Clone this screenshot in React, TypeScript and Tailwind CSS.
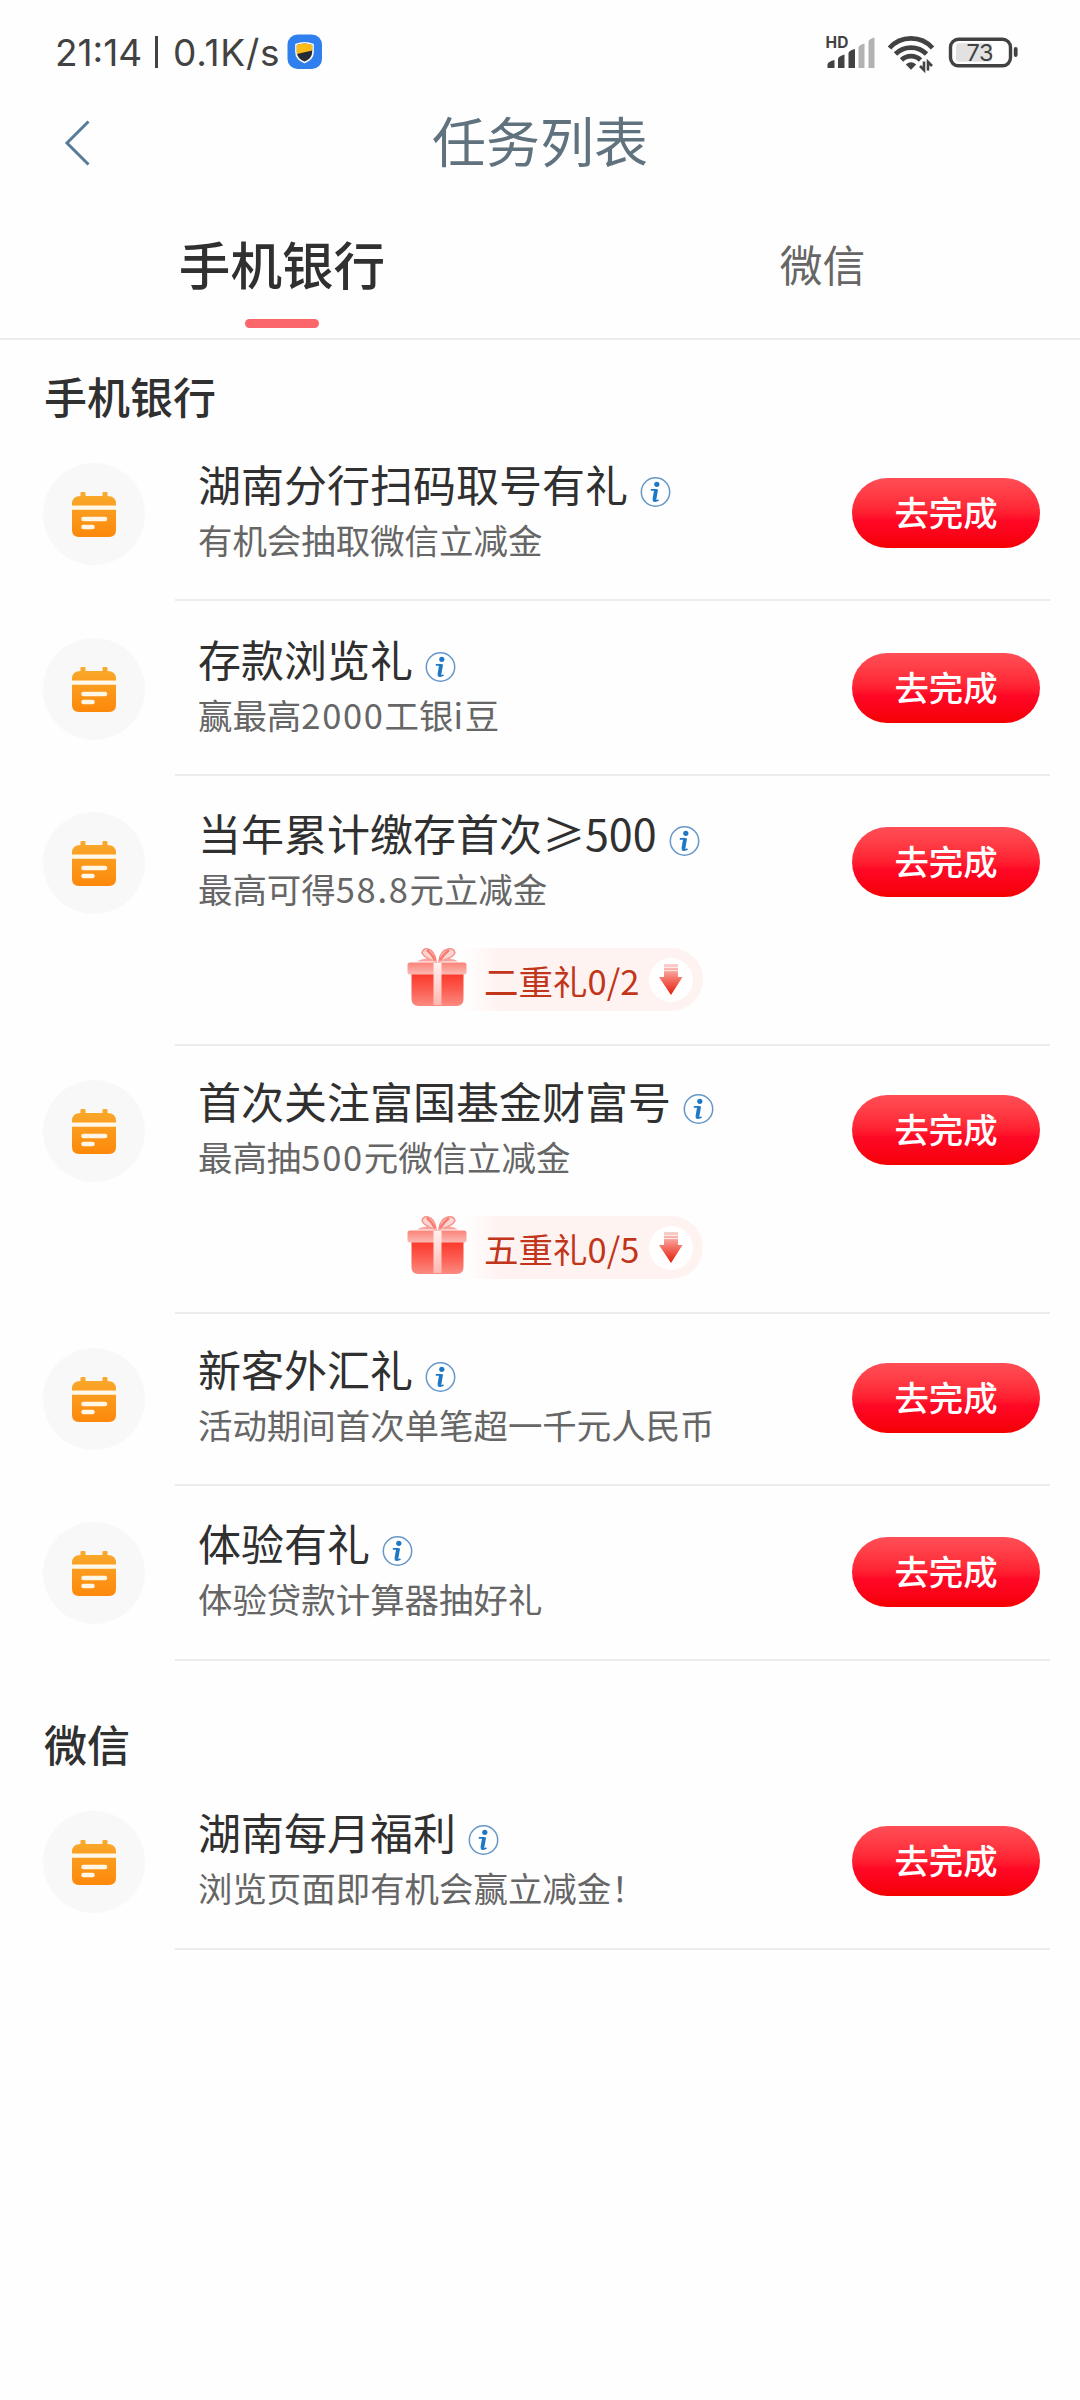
import React from "react";

type Task = {
  title: string;
  desc: string;
  size: string;
  gift?: string;
};

const BANK_TASKS: Task[] = [
  { title: "湖南分行扫码取号有礼", desc: "有机会抽取微信立减金", size: "h-[138px] mb-[37px]" },
  { title: "存款浏览礼", desc: "赢最高2000工银i豆", size: "h-[138px] mb-[36px]" },
  { title: "当年累计缴存首次≥500", desc: "最高可得58.8元立减金", size: "h-[234px] mb-[34px]", gift: "二重礼0/2" },
  { title: "首次关注富国基金财富号", desc: "最高抽500元微信立减金", size: "h-[234px] mb-[34px]", gift: "五重礼0/5" },
  { title: "新客外汇礼", desc: "活动期间首次单笔超一千元人民币", size: "h-[138px] mb-[36px]" },
  { title: "体验有礼", desc: "体验贷款计算器抽好礼", size: "h-[139px]" },
];

const WECHAT_TASKS: Task[] = [
  { title: "湖南每月福利", desc: "浏览页面即有机会赢立减金！", size: "h-[139px]" },
];

function StatusBar() {
  return (
    <div className="flex h-[104px] items-center justify-between pl-[55px] pr-[61px]">
      <div className="flex items-center font-['Inter',sans-serif] text-[37px] leading-[44px] text-[#424242]">
        <span className="mt-px w-[100px] whitespace-nowrap">21:14</span>
        <span className="h-[32px] w-[3px] bg-[#424242]" />
        <span className="ml-[15px] mt-px w-[107px] whitespace-nowrap tracking-[0.800px]">0.1K/s</span>
        <svg width="36" height="36" viewBox="0 0 36 36" className="ml-[7px]">
          <rect x="0.5" y="0.5" width="34.5" height="34.5" rx="10" fill="#2f80ee" />
          <path d="M9 10.5Q17.5 7 26 10.5V18Q26 25 17.5 28.5Q9 25 9 18Z" fill="#272b35" stroke="#fff" strokeWidth="1.6" />
          <path d="M9.8 11Q17.5 8 25.2 11V16.5L9.8 20Z" fill="#fcbc18" />
        </svg>
      </div>
      <svg width="194" height="46" viewBox="0 -6 194 46" className="mt-px overflow-visible">
        <text x="0.500" y="12" fontSize="15.500" fontWeight="700" fill="#424242" fontFamily="Inter, sans-serif" textLength="23">HD</text>
        <path d="M2.500 32V28.500Q3 25.500 9.500 24V32Z" fill="#424242" />
        <path d="M13 32V22.500Q13.500 20.500 19.500 18.500V32Z" fill="#424242" />
        <path d="M23.500 32V17Q24 14.500 30 13V32Z" fill="#424242" />
        <path d="M33.500 32V11.500Q34 9 39.500 7.500V32Z" fill="#b2b2b2" />
        <path d="M43.500 32V5.500Q44 3 49.500 1.500V32Z" fill="#b2b2b2" />
        <g fill="none" stroke="#424242" strokeWidth="4.800">
          <path d="M64.500 12A29 29 0 0 1 107.500 12" />
          <path d="M70.500 18A22 22 0 0 1 101.500 18" />
          <path d="M76.500 24A13.500 13.500 0 0 1 95.500 24" />
        </g>
        <path d="M80.800 28.500Q86 24 91.200 28.500L86 33.700Z" fill="#424242" />
        <path d="M99 25.500V34L95 30M103 34.500V26L107 30" fill="none" stroke="#424242" strokeWidth="2.600" />
        <rect x="125.500" y="3.300" width="60" height="26.500" rx="8" fill="#fff" stroke="#424242" strokeWidth="3.400" />
        <rect x="131" y="7.300" width="36" height="18.500" rx="3" fill="#e2e2e2" />
        <text x="155" y="25.200" fontSize="23.500" fill="#424242" textAnchor="middle" fontFamily="Inter, sans-serif" textLength="27">73</text>
        <path d="M190.700 13V19" stroke="#424242" strokeWidth="3.800" strokeLinecap="round" />
      </svg>
    </div>
  );
}

function Header() {
  return (
    <header className="grid h-[76px] grid-cols-3 items-center">
      <svg width="30" height="46" viewBox="0 0 30 46" className="ml-[63px] mt-[2px]">
        <path d="M25.500 1.500L4 23L25.500 44.500" fill="none" stroke="#587b98" strokeWidth="3" />
      </svg>
      <h1 className="-mt-[5px] text-center text-[54px] leading-[76px] text-[#61727f]">任务列表</h1>
    </header>
  );
}

function Tabs() {
  return (
    <nav className="grid h-[160px] grid-cols-2 border-b-2 border-[#ececec]">
      <div className="flex flex-col items-center pl-[24px]">
        <span className="mt-[45px] text-[51.600px] font-medium leading-[76px] text-[#303030]">手机银行</span>
        <span className="mt-[18px] h-[9px] w-[74px] rounded-full bg-[#fb666b]" />
      </div>
      <div className="flex justify-center pl-[25px]">
        <span className="mt-[51px] text-[42.800px] leading-[64px] text-[#666]">微信</span>
      </div>
    </nav>
  );
}

function CalendarIcon() {
  return (
    <div className="flex h-[102px] w-[102px] shrink-0 items-center justify-center rounded-full bg-[#f8f8f8]">
      <svg width="46" height="48" viewBox="0 0 46 48" className="mt-[2px]">
        <defs>
          <linearGradient id="calendar" x1="0" y1="0" x2="0" y2="1">
            <stop offset="0" stopColor="#f9aa2d" />
            <stop offset="1" stopColor="#fd880a" />
          </linearGradient>
        </defs>
        <path
          d="M10.500 1h3q1 0 1 1v3h17V2q0-1 1-1h3q1 0 1 1v3q8.500 0 8.500 8v26q0 7-7 7H8q-7 0-7-7V13q0-8 8.500-8V2q0-1 1-1z"
          fill="url(#calendar)"
        />
        <path d="M1 14.500h44v4.300H1z" fill="#fff8e8" />
        <path d="M12.500 28h21.500M12.500 36h9" stroke="#fff6e6" strokeWidth="4.600" strokeLinecap="round" />
      </svg>
    </div>
  );
}

function InfoIcon() {
  return (
    <svg width="31" height="32" viewBox="0 0 30 32" className="ml-[12px] mt-[17px]">
      <circle cx="15" cy="16" r="14.200" fill="#fff" stroke="#6597ca" strokeWidth="1.500" />
      <circle cx="16.300" cy="8.300" r="2.600" fill="#1f78c4" />
      <path d="M10.300 13.800h5.500M12.500 24.300q2 1.500 5.500-.3" fill="none" stroke="#1f78c4" strokeWidth="1.800" />
      <path d="M15.700 13.200l-1.900 10.800" stroke="#1f78c4" strokeWidth="3.800" />
    </svg>
  );
}

function GiftIcon() {
  return (
    <svg width="60" height="60" viewBox="0 0 60 60" className="relative shrink-0">
      <defs>
        <linearGradient id="giftBox" x1="0" y1="0" x2="0" y2="1">
          <stop offset="0" stopColor="#fb3527" />
          <stop offset="0.500" stopColor="#fc5a4e" />
          <stop offset="1" stopColor="#fb8b81" />
        </linearGradient>
        <linearGradient id="giftLid" x1="0" y1="0" x2="0" y2="1">
          <stop offset="0" stopColor="#fb8379" />
          <stop offset="1" stopColor="#fbb9b3" />
        </linearGradient>
        <linearGradient id="ribbon" x1="0" y1="0" x2="0" y2="1">
          <stop offset="0" stopColor="#fff1ef" />
          <stop offset="1" stopColor="#fdb8b1" />
        </linearGradient>
      </defs>
      <path d="M4.500 25h52v27q0 7-7 7h-38q-7 0-7-7z" fill="url(#giftBox)" />
      <rect x="0.500" y="15.500" width="59" height="12" rx="2.500" fill="url(#giftLid)" />
      <rect x="26.500" y="16" width="8" height="42" fill="url(#ribbon)" />
      <path d="M29 14Q28 4 21 2Q16 1 15 6Q18 12 29 14Z" fill="#fdd5d1" stroke="#f99189" strokeWidth="1.500" />
      <path d="M32 14Q33 4 41 2Q47 1 48 6Q45 12 32 14Z" fill="#fdd5d1" stroke="#f99189" strokeWidth="1.500" />
      <path d="M28 13Q25 7 20 3M33 13Q37 7 42 3" fill="none" stroke="#f77b71" strokeWidth="2.400" />
      <path d="M30 14.500Q18 9 10 14.500ZM31 14.500Q44 9 51 14.500Z" fill="#f9a29b" />
    </svg>
  );
}

function DownArrow() {
  return (
    <svg width="44" height="44" viewBox="0 0 44 44" className="shrink-0">
      <defs>
        <linearGradient id="arrow" x1="0" y1="0" x2="0" y2="1">
          <stop offset="0" stopColor="#fbd3cf" />
          <stop offset="0.450" stopColor="#f5786d" />
          <stop offset="1" stopColor="#e61c08" />
        </linearGradient>
      </defs>
      <circle cx="22" cy="22" r="22" fill="#fff" />
      <path d="M15 6h14v13h4.500L22 37 10 19h5z" fill="url(#arrow)" />
      <path d="M14 9.300h16M14 12.600h16" stroke="#fff" strokeWidth="0.800" />
    </svg>
  );
}

function GiftBadge({ label }: { label: string }) {
  return (
    <div className="ml-[232px] mt-[35px] flex h-[66px] w-[300px] items-start">
      <GiftIcon />
      <div className="-ml-[4px] mt-px flex h-[63px] w-[240px] shrink-0 items-center rounded-r-full bg-gradient-to-r from-[#fefefe] via-[#fff3f2] via-15% to-[#fff3f2]">
        <span className="mt-px w-[186px] shrink-0 whitespace-nowrap pl-[21px] text-[34.500px] leading-[50px] text-[#c1361a]">
          {label}
        </span>
        <DownArrow />
      </div>
    </div>
  );
}

/** Sets Latin letters and digits slightly wider than the Chinese text around them. */
function Description({ text }: { text: string }) {
  return (
    <p className="mt-px whitespace-nowrap text-[34.450px] leading-[48px] text-[#666]">
      {text.split(/([0-9a-z.]+)/).map((part, i) =>
        i % 2 === 1 ? (
          <span key={i} className="tracking-[1.700px]">
            {part}
          </span>
        ) : (
          part
        ),
      )}
    </p>
  );
}

function TaskRow({ task }: { task: Task }) {
  return (
    <li className={"flex pl-[43px] " + task.size}>
      <CalendarIcon />
      <div className="ml-[30px] flex w-[875px] flex-col border-b-2 border-[#ececec]">
        <div className="flex h-[100px] shrink-0 pl-[23px]">
          <div className="-mt-[11px] w-[654px]">
            <div className="flex h-[62px] items-center">
              <h3 className="whitespace-nowrap text-[43px] leading-[62px] text-[#303030]">{task.title}</h3>
              <InfoIcon />
            </div>
            <Description text={task.desc} />
          </div>
          <button className="mt-[15px] h-[70px] w-[188px] shrink-0 rounded-full bg-gradient-to-b from-[#ff4d56] via-[#ff0826] via-60% to-[#f50000] pb-[4px] text-[34.400px] font-medium leading-[66px] text-white">
            去完成
          </button>
        </div>
        {task.gift && <GiftBadge label={task.gift} />}
      </div>
    </li>
  );
}

function TaskSection({ title, tasks, heading }: { title: string; tasks: Task[]; heading: string }) {
  return (
    <section>
      <h2 className={"pl-[44px] text-[43px] font-medium leading-[64px] text-[#303030] " + heading}>{title}</h2>
      <ul>
        {tasks.map((task) => (
          <TaskRow key={task.title} task={task} />
        ))}
      </ul>
    </section>
  );
}

export default function App() {
  return (
    <main className="h-[2400px] w-[1080px] overflow-hidden bg-[#fefefe] font-['Noto_Sans_CJK_SC',sans-serif]">
      <StatusBar />
      <Header />
      <Tabs />
      <TaskSection title="手机银行" tasks={BANK_TASKS} heading="h-[123px] pt-[23px]" />
      <TaskSection title="微信" tasks={WECHAT_TASKS} heading="h-[150px] pt-[50px]" />
    </main>
  );
}
